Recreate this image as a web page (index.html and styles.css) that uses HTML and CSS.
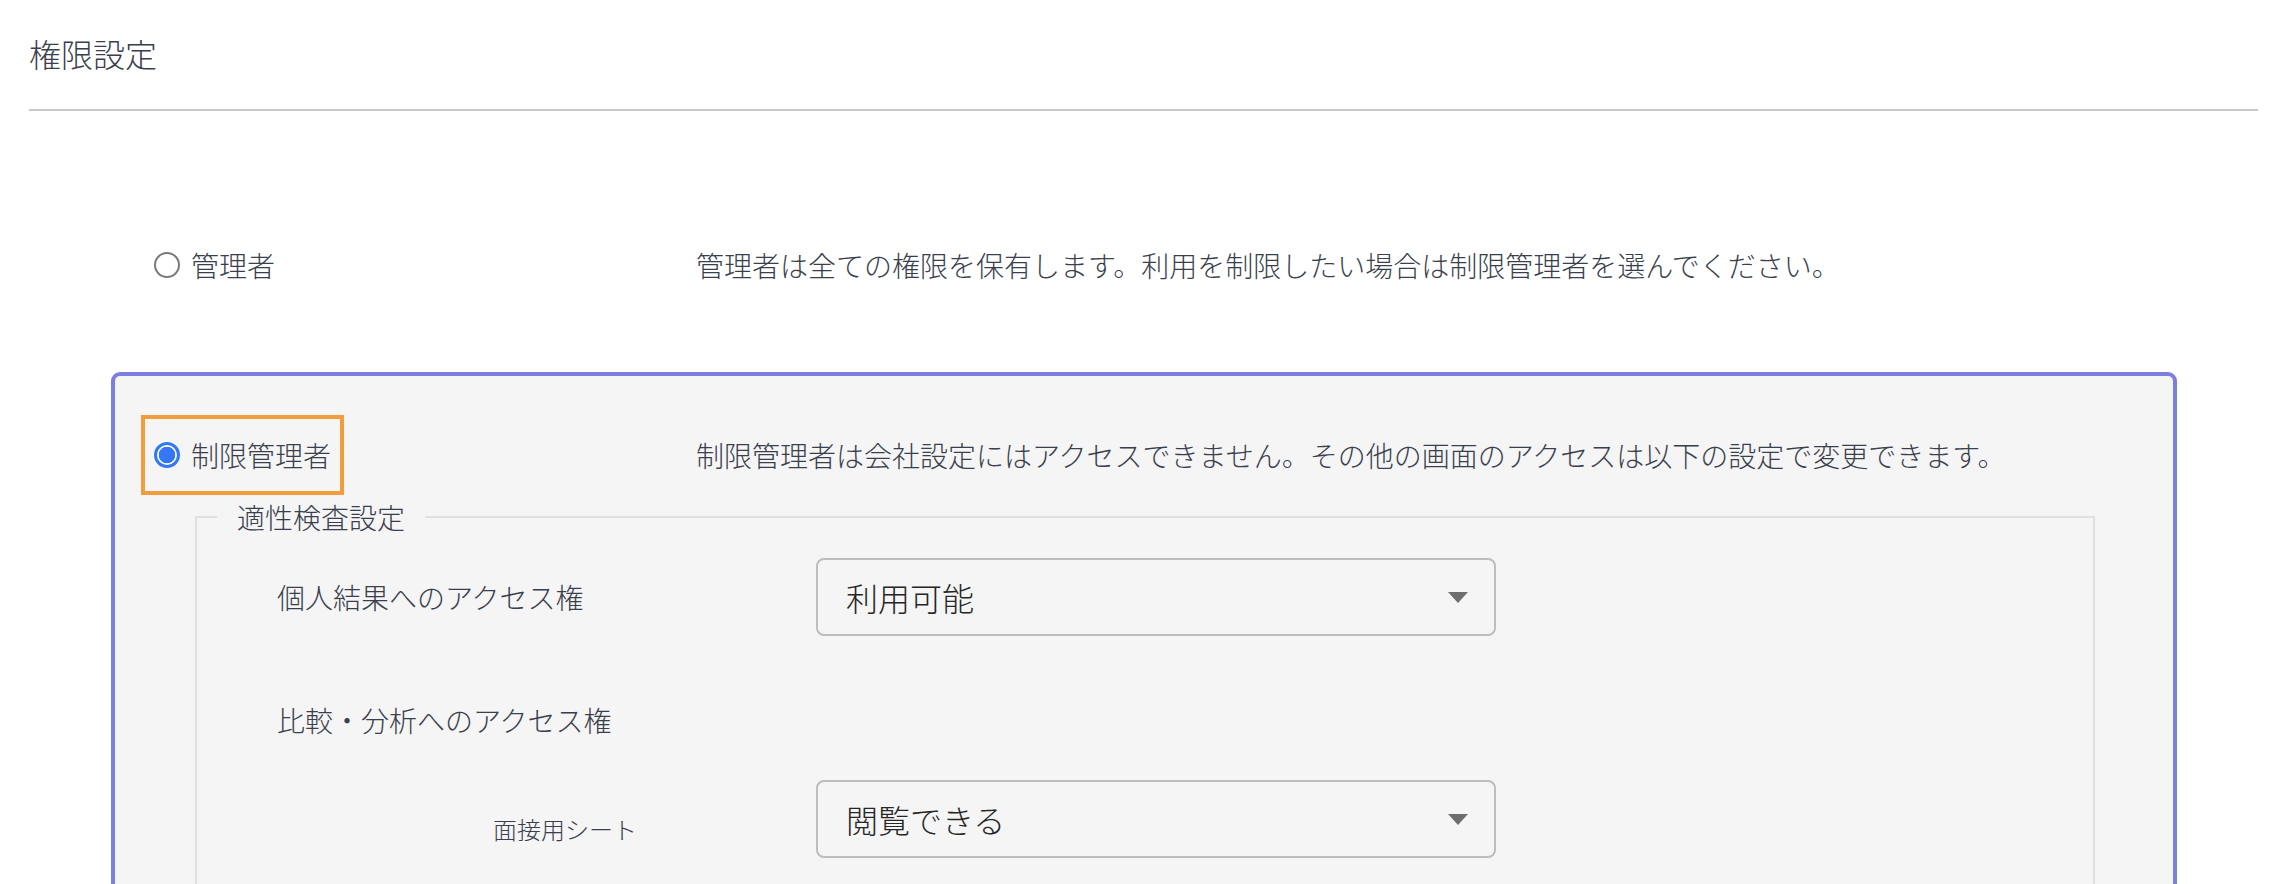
FILE: index.html
```html
<!DOCTYPE html>
<html lang="ja">
<head>
<meta charset="utf-8">
<title>権限設定</title>
<link rel="stylesheet" href="styles.css">
</head>
<body>
<header class="page-header">
  <h1 class="title">権限設定</h1>
</header>
<main class="options">
  <section class="option">
    <div class="option-head">
      <label class="choice">
        <span class="radio"></span>
        <span class="choice-text">管理者</span>
      </label>
      <p class="desc">管理者は全ての権限を保有します。利用を制限したい場合は制限管理者を選んでください。</p>
    </div>
  </section>
  <section class="option selected">
    <div class="option-head">
      <label class="choice focused">
        <span class="radio checked"></span>
        <span class="choice-text">制限管理者</span>
      </label>
      <p class="desc">制限管理者は会社設定にはアクセスできません。その他の画面のアクセスは以下の設定で変更できます。</p>
    </div>
    <fieldset class="group">
      <legend class="group-title">適性検査設定</legend>
      <div class="row">
        <span class="row-label">個人結果へのアクセス権</span>
        <div class="select">
          <span class="select-value">利用可能</span>
          <svg class="caret" width="20" height="11" viewBox="0 0 20 11"><path d="M0 0H20L10 11Z" fill="#6e6e6e"/></svg>
        </div>
      </div>
      <div class="row row-heading">
        <span class="row-label">比較・分析へのアクセス権</span>
      </div>
      <div class="row row-sub">
        <span class="row-label sub-label">面接用シート</span>
        <div class="select">
          <span class="select-value">閲覧できる</span>
          <svg class="caret" width="20" height="11" viewBox="0 0 20 11"><path d="M0 0H20L10 11Z" fill="#6e6e6e"/></svg>
        </div>
      </div>
    </fieldset>
  </section>
</main>
</body>
</html>
```

FILE: styles.css
```css
html, body {
  margin: 0;
  padding: 0;
  overflow: hidden;
  background: #ffffff;
}

body {
  font-family: "Noto Sans CJK JP", "Noto Sans", sans-serif;
  font-weight: 300;
  color: #3a3f4e;
}

.page-header {
  margin: 0 28px 0 29px;
  padding: 29px 0 32px;
  border-bottom: 2px solid #c9c9cd;
}

.title {
  margin: 0;
  font-size: 32px;
  line-height: 48px;
  font-weight: 300;
}

.options {
  margin: 71px 109px 0 111px;
  display: flex;
  flex-direction: column;
  gap: 24px;
}

.option {
  border: 4px solid transparent;
  border-radius: 9px;
  padding: 39px 0;
}

.option.selected {
  border-color: #7b7fe0;
  background: #f5f5f5;
  padding-bottom: 200px;
}

.option-head {
  display: grid;
  grid-template-columns: 555px auto;
  align-items: center;
  margin-left: 26px;
}

.choice {
  justify-self: start;
  display: inline-flex;
  align-items: center;
  gap: 11px;
  height: 80px;
  box-sizing: border-box;
  border: 4px solid transparent;
  padding: 0 9px 0 9px;
  font-size: 28px;
}

.choice.focused {
  border-color: #f29d3b;
}

.radio {
  width: 26px;
  height: 26px;
  box-sizing: border-box;
  border-radius: 50%;
  border: 2px solid #7a7a7a;
  background: #ffffff;
  flex: none;
}

.radio.checked {
  border: 3px solid #3478f6;
  background: radial-gradient(circle, #3478f6 0 8px, #ffffff 8.6px);
}

.desc {
  margin: 0;
  font-size: 28px;
  line-height: 40px;
}

.group {
  margin: 2px 78px 0 80px;
  border: 2px solid #e0e0e0;
  padding: 21px 0 40px;
  min-width: 0;
}

.group-title {
  margin-left: 20px;
  padding: 0 20px;
  font-size: 28px;
  line-height: 40px;
}

.row {
  display: flex;
  align-items: center;
  padding-left: 80px;
}

.row-label {
  width: 539px;
  flex: none;
  font-size: 28px;
  line-height: 40px;
}

.row-heading {
  margin-top: 64px;
}

.row-sub {
  margin-top: 40px;
}

.sub-label {
  box-sizing: border-box;
  padding-left: 216px;
  font-size: 24px;
  margin-top: 20px;
}

.select {
  width: 680px;
  height: 78px;
  box-sizing: border-box;
  border: 2px solid #bdbdbd;
  border-radius: 8px;
  display: flex;
  align-items: center;
  justify-content: space-between;
  padding: 0 26px 0 28px;
}

.select-value {
  font-size: 32px;
  color: #262626;
}

.caret {
  display: block;
}
```
